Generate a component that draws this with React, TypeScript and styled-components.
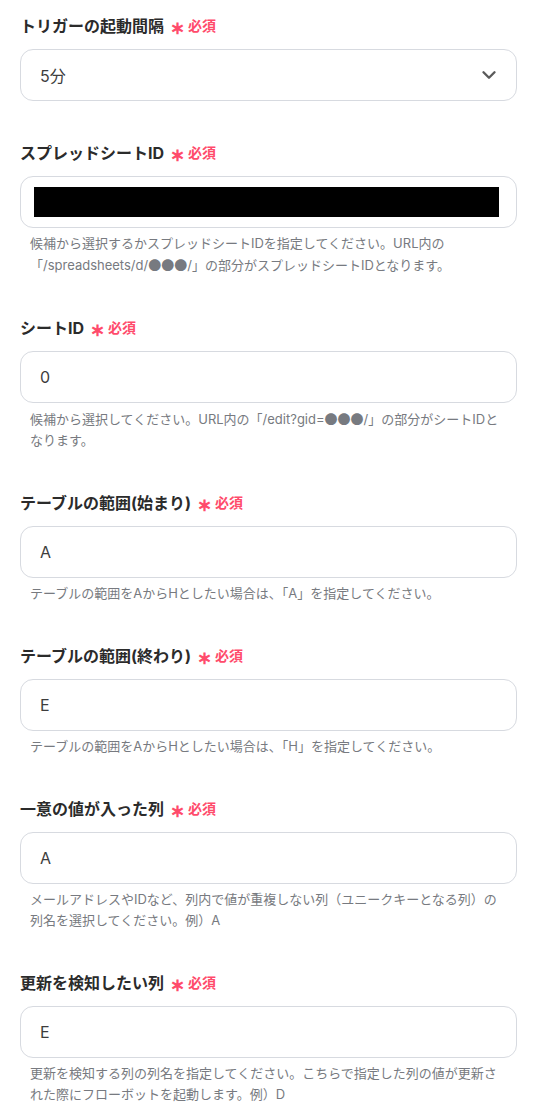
import React from 'react'
import styled, { createGlobalStyle } from 'styled-components'
import { ChevronDown } from 'lucide-react'

const GlobalStyle = createGlobalStyle`
  body {
    margin: 0;
    background: #ffffff;
    font-family: Inter, "Noto Sans CJK JP", sans-serif;
    color: #2b2b2b;
  }
`

const Form = styled.div`
  display: flex;
  flex-direction: column;
  gap: 40px;
  padding: 14px 34px 20px 20px;
`

const Field = styled.div`
  display: flex;
  flex-direction: column;
`

const Label = styled.div`
  display: flex;
  align-items: center;
  font-size: 16px;
  line-height: 24px;
  font-weight: 700;
  color: #2b2b2b;
  margin-bottom: 11px;
`

const Required = styled.span`
  display: inline-flex;
  align-items: center;
  margin-left: 6px;
  font-size: 14px;
  font-weight: 700;
  color: #ff4b6b;
`

const Asterisk = styled.span`
  font-size: 18px;
  margin-right: 3px;
  line-height: 1;
  position: relative;
  top: 2px;
`

const Box = styled.div`
  display: flex;
  align-items: center;
  justify-content: space-between;
  height: 52px;
  box-sizing: border-box;
  border: 1px solid #d7dae0;
  border-radius: 13px;
  padding: 0 16px 0 19px;
  font-size: 16px;
  color: #3d3d3d;
  background: #fff;
`

const Redacted = styled.div`
  width: 465px;
  height: 30px;
  background: #000;
  margin-left: -6px;
`

const Help = styled.div`
  margin-top: 5px;
  padding-left: 10px;
  font-size: 13px;
  line-height: 21px;
  color: #777a80;
  font-feature-settings: "chws";
  white-space: nowrap;
`

const Dots = styled.span`
  font-family: "Noto Sans CJK JP", sans-serif;
`

type FieldProps = {
  label: string
  children: React.ReactNode
  help?: React.ReactNode
}

const FormField = ({ label, children, help }: FieldProps) => (
  <Field>
    <Label>
      {label}
      <Required>
        <Asterisk>∗</Asterisk>必須
      </Required>
    </Label>
    {children}
    {help && <Help>{help}</Help>}
  </Field>
)

const App = () => {
  return (
    <>
      <GlobalStyle />
      <Form>
        <FormField label="トリガーの起動間隔">
          <Box>
            5分
            <ChevronDown size={22} strokeWidth={2.6} color="#5a5a5a" />
          </Box>
        </FormField>

        <FormField
          label="スプレッドシートID"
          help={<>候補から選択するかスプレッドシートIDを指定してください。URL内の<br />「/spreadsheets/d/<Dots>●●●</Dots>/」の部分がスプレッドシートIDとなります。</>}
        >
          <Box>
            <Redacted />
          </Box>
        </FormField>

        <FormField
          label="シートID"
          help={<>候補から選択してください。URL内の「/edit?gid=<Dots>●●●</Dots>/」の部分がシートIDと<br />なります。</>}
        >
          <Box>0</Box>
        </FormField>

        <FormField
          label="テーブルの範囲(始まり)"
          help="テーブルの範囲をAからHとしたい場合は、「A」を指定してください。"
        >
          <Box>A</Box>
        </FormField>

        <FormField
          label="テーブルの範囲(終わり)"
          help="テーブルの範囲をAからHとしたい場合は、「H」を指定してください。"
        >
          <Box>E</Box>
        </FormField>

        <FormField
          label="一意の値が入った列"
          help={<>メールアドレスやIDなど、列内で値が重複しない列（ユニークキーとなる列）の<br />列名を選択してください。例）A</>}
        >
          <Box>A</Box>
        </FormField>

        <FormField
          label="更新を検知したい列"
          help={<>更新を検知する列の列名を指定してください。こちらで指定した列の値が更新さ<br />れた際にフローボットを起動します。例）D</>}
        >
          <Box>E</Box>
        </FormField>
      </Form>
    </>
  )
}

export default App
